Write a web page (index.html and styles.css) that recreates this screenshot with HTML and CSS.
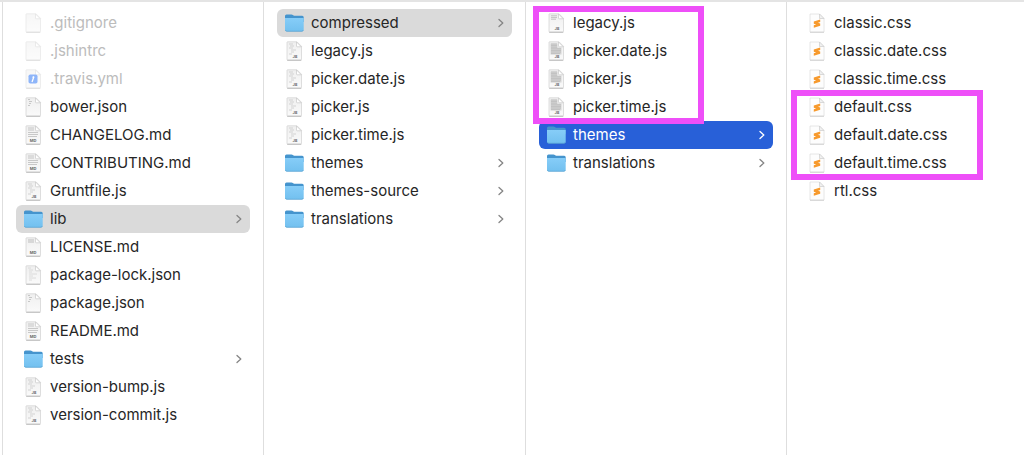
FILE: index.html
```
<!DOCTYPE html>
<html lang="en">
<head>
    <meta charset="UTF-8">
    <meta name="viewport" content="width=device-width, initial-scale=1.0">
    <title>Files</title>
    <link rel="stylesheet" href="styles.css">
</head>
<body>
    <!-- Icon shapes -->
    <svg class="icon-defs" aria-hidden="true">
        <defs>
            <linearGradient id="paper" x1="0" y1="0" x2="0" y2="1">
                <stop offset="0" stop-color="#efefef"/>
                <stop offset="1" stop-color="#fafafa"/>
            </linearGradient>
            <linearGradient id="front" x1="0" y1="0" x2="0" y2="1">
                <stop offset="0" stop-color="#86cdf8"/>
                <stop offset="1" stop-color="#72c0ef"/>
            </linearGradient>
        </defs>
        <symbol id="page" viewBox="0 0 20 20">
            <path d="M2.500 .8H12L16.500 5.300V18.200Q16.500 19 15.700 19H2.800Q2 19 2 18.200V1.300Q2 .8 2.500 .8Z" fill="url(#paper)" stroke="#d6d6d6" stroke-width=".8"/>
            <path d="M2.200 19.300H16.300" stroke="#b8b8b8" stroke-width=".9"/>
            <path d="M11.500 1V5Q11.500 5.800 12.300 5.800H16.300Z" fill="#fff" stroke="#c8c8c8" stroke-width=".7"/>
        </symbol>
        <symbol id="yml" viewBox="0 0 20 20">
            <use href="#page"/>
            <rect x="4.500" y="5.500" width="9" height="9" rx="1.800" fill="#1f6df5"/>
            <path d="M10 7.500L8 13M8.500 8.500L10 7.500" stroke="#fff" stroke-width="1.300" fill="none"/>
        </symbol>
        <symbol id="json" viewBox="0 0 20 20">
            <use href="#page"/>
            <path d="M4 2.500H6M5 4.500H8M5 6.500H7M4 8.500H6" stroke="#bdbdbd" stroke-width=".8"/>
        </symbol>
        <symbol id="json-long" viewBox="0 0 20 20">
            <use href="#page"/>
            <path d="M4 3H7M5 5H9M5 7H8M5 9H13M5 11H9M5 13H12M5 15H8" stroke="#d6d6d6" stroke-width=".8"/>
        </symbol>
        <symbol id="md" viewBox="0 0 20 20">
            <use href="#page"/>
            <path d="M4 3H10M4 5H10M4 7.500H14M4 9.500H14M4 11.500H13" stroke="#bcbcbc" stroke-width=".8"/>
        </symbol>
        <symbol id="md-short" viewBox="0 0 20 20">
            <use href="#page"/>
            <path d="M4 3H10M4 5H10" stroke="#b8b8b8" stroke-width=".9"/>
        </symbol>
        <symbol id="js" viewBox="0 0 20 20">
            <use href="#page"/>
            <path d="M4 3H8M5 5H9M4 7H8M6 9H11M6 11H9M4 13H7" stroke="#cacaca" stroke-width=".8"/>
        </symbol>
        <symbol id="js-short" viewBox="0 0 20 20">
            <use href="#page"/>
            <path d="M4 2.800H10M4 4.600H10M4 6.200H9" stroke="#b8b8b8" stroke-width=".8"/>
        </symbol>
        <symbol id="js-dense" viewBox="0 0 20 20">
            <use href="#page"/>
            <path d="M3.500 2.500H10.500V6.500H14.500V13.500H3.500Z" fill="#d6d6d6"/>
            <path d="M4 3H10M4 4.600H10M4 6.200H10M4 7.800H14M4 9.400H14M4 11H14M4 12.600H13" stroke="#b6b6b6" stroke-width=".7"/>
        </symbol>
        <symbol id="css" viewBox="0 0 20 20">
            <path d="M2 1H11.500L16 5.500V19H2Z" fill="#fdfdfd" stroke="#e0e0e0" stroke-width=".8"/>
            <path d="M2 19.300H16" stroke="#cbcbcb" stroke-width=".8"/>
            <path d="M11.500 1V5.500H16Z" fill="#f1f1f1" stroke="#cccccc" stroke-width=".7"/>
            <path d="M12.200 6.500V9L10 9.700L12.200 10.500V12.700L5.800 14.700V12.200L8.200 11.500L5.800 10.700V8.500Z" fill="#f79a2d"/>
        </symbol>
        <symbol id="folder" viewBox="0 0 20 20">
            <path d="M0 3Q0 1.500 1.500 1.500H6.500Q7.300 1.500 7.900 2.100T9.300 2.700H17.200Q18.700 2.700 18.700 4.200V9H0Z" fill="#4594cd"/>
            <path d="M0 5H18.700V16.800Q18.700 18.300 17.200 18.300H1.500Q0 18.300 0 16.800Z" fill="url(#front)"/>
            <path d="M.5 17.200Q.7 18.300 1.700 18.300H17Q18 18.300 18.200 17.200" fill="none" stroke="#5aa5d3" stroke-width=".8"/>
        </symbol>
        <symbol id="chevron" viewBox="0 0 6 10">
            <path d="M1 1.500L4.800 5L1 8.500" fill="none" stroke="currentColor" stroke-width="1.300" stroke-linecap="round" stroke-linejoin="round"/>
        </symbol>
    </svg>

    <main class="browser">
        <ul class="column">
            <li class="row hidden-file"><svg class="icon"><use href="#page"/></svg><span class="name">.gitignore</span></li>
            <li class="row hidden-file"><svg class="icon"><use href="#page"/></svg><span class="name">.jshintrc</span></li>
            <li class="row hidden-file"><svg class="icon"><use href="#yml"/></svg><span class="name">.travis.yml</span></li>
            <li class="row"><svg class="icon"><use href="#json"/></svg><span class="name">bower.json</span></li>
            <li class="row"><svg class="icon"><use href="#md"/><text x="9" y="17" class="icon-label">MD</text></svg><span class="name">CHANGELOG.md</span></li>
            <li class="row"><svg class="icon"><use href="#md"/><text x="9" y="17" class="icon-label">MD</text></svg><span class="name">CONTRIBUTING.md</span></li>
            <li class="row"><svg class="icon"><use href="#js"/><text x="10" y="17" class="icon-label">JS</text></svg><span class="name">Gruntfile.js</span></li>
            <li class="row open"><svg class="icon"><use href="#folder"/></svg><span class="name">lib</span><svg class="chevron"><use href="#chevron"/></svg></li>
            <li class="row"><svg class="icon"><use href="#md-short"/><text x="9" y="17" class="icon-label">MD</text></svg><span class="name">LICENSE.md</span></li>
            <li class="row"><svg class="icon"><use href="#json-long"/></svg><span class="name">package-lock.json</span></li>
            <li class="row"><svg class="icon"><use href="#json"/></svg><span class="name">package.json</span></li>
            <li class="row"><svg class="icon"><use href="#md"/><text x="9" y="17" class="icon-label">MD</text></svg><span class="name">README.md</span></li>
            <li class="row"><svg class="icon"><use href="#folder"/></svg><span class="name">tests</span><svg class="chevron"><use href="#chevron"/></svg></li>
            <li class="row"><svg class="icon"><use href="#js"/><text x="10" y="17" class="icon-label">JS</text></svg><span class="name">version-bump.js</span></li>
            <li class="row"><svg class="icon"><use href="#js"/><text x="10" y="17" class="icon-label">JS</text></svg><span class="name">version-commit.js</span></li>
        </ul>

        <ul class="column">
            <li class="row open"><svg class="icon"><use href="#folder"/></svg><span class="name">compressed</span><svg class="chevron"><use href="#chevron"/></svg></li>
            <li class="row"><svg class="icon"><use href="#js"/><text x="10" y="17" class="icon-label">JS</text></svg><span class="name">legacy.js</span></li>
            <li class="row"><svg class="icon"><use href="#js"/><text x="10" y="17" class="icon-label">JS</text></svg><span class="name">picker.date.js</span></li>
            <li class="row"><svg class="icon"><use href="#js"/><text x="10" y="17" class="icon-label">JS</text></svg><span class="name">picker.js</span></li>
            <li class="row"><svg class="icon"><use href="#js"/><text x="10" y="17" class="icon-label">JS</text></svg><span class="name">picker.time.js</span></li>
            <li class="row"><svg class="icon"><use href="#folder"/></svg><span class="name">themes</span><svg class="chevron"><use href="#chevron"/></svg></li>
            <li class="row"><svg class="icon"><use href="#folder"/></svg><span class="name">themes-source</span><svg class="chevron"><use href="#chevron"/></svg></li>
            <li class="row"><svg class="icon"><use href="#folder"/></svg><span class="name">translations</span><svg class="chevron"><use href="#chevron"/></svg></li>
        </ul>

        <ul class="column">
            <li class="marked marked-js">
                <ul>
                    <li class="row"><svg class="icon"><use href="#js-short"/><text x="10" y="17" class="icon-label">JS</text></svg><span class="name">legacy.js</span></li>
                    <li class="row"><svg class="icon"><use href="#js-dense"/><text x="10" y="17" class="icon-label">JS</text></svg><span class="name">picker.date.js</span></li>
                    <li class="row"><svg class="icon"><use href="#js-dense"/><text x="10" y="17" class="icon-label">JS</text></svg><span class="name">picker.js</span></li>
                    <li class="row"><svg class="icon"><use href="#js-dense"/><text x="10" y="17" class="icon-label">JS</text></svg><span class="name">picker.time.js</span></li>
                </ul>
            </li>
            <li class="row selected"><svg class="icon"><use href="#folder"/></svg><span class="name">themes</span><svg class="chevron"><use href="#chevron"/></svg></li>
            <li class="row"><svg class="icon"><use href="#folder"/></svg><span class="name">translations</span><svg class="chevron"><use href="#chevron"/></svg></li>
        </ul>

        <ul class="column">
            <li class="row"><svg class="icon"><use href="#css"/></svg><span class="name">classic.css</span></li>
            <li class="row"><svg class="icon"><use href="#css"/></svg><span class="name">classic.date.css</span></li>
            <li class="row"><svg class="icon"><use href="#css"/></svg><span class="name">classic.time.css</span></li>
            <li class="marked marked-css">
                <ul>
                    <li class="row"><svg class="icon"><use href="#css"/></svg><span class="name">default.css</span></li>
                    <li class="row"><svg class="icon"><use href="#css"/></svg><span class="name">default.date.css</span></li>
                    <li class="row"><svg class="icon"><use href="#css"/></svg><span class="name">default.time.css</span></li>
                </ul>
            </li>
            <li class="row"><svg class="icon"><use href="#css"/></svg><span class="name">rtl.css</span></li>
        </ul>
    </main>
</body>
</html>
```
FILE: styles.css
```
*,
*::after {
    margin: 0;
    padding: 0;
    box-sizing: border-box;
}

body {
    background: #fff;
    color: #262626;
    font-family: Inter, "Liberation Sans", sans-serif;
    font-size: 15px;
    line-height: 28px;
}

ul {
    list-style: none;
}

.icon-defs {
    display: block;
    width: 0;
    height: 0;
}

/* Column view */
.browser {
    display: grid;
    grid-template-columns: 261fr 262fr 261fr 238fr;
    min-height: 100vh;
    padding-left: 2px;
    border-top: 2px solid #e4e4e4;
}

.column {
    padding: 7px 13px 0;
    border-left: 1px solid #dedede;
}

/* Rows */
.row {
    display: flex;
    align-items: center;
    gap: 6px;
    height: 28px;
    padding: 0 8px;
    border-radius: 6px;
}

.icon {
    flex: none;
    width: 20px;
    height: 20px;
}

.icon-label {
    fill: #666;
    font-size: 4px;
    font-weight: 700;
    line-height: 4px;
    text-anchor: middle;
}

.name {
    flex: 1;
    white-space: nowrap;
}

.chevron {
    flex: none;
    width: 6px;
    height: 10px;
    color: #858585;
}

.hidden-file {
    color: #bcbcbc;
}

.hidden-file .icon {
    opacity: 0.5;
}

.open {
    background: #dadada;
}

.selected {
    background: #2860d8;
    color: #fff;
}

.selected .chevron {
    color: #fff;
}

/* Pink frame drawn over a run of files */
.marked {
    position: relative;
}

.marked::after {
    content: "";
    position: absolute;
    top: -3px;
    bottom: -3px;
    border: 6px solid #ee4ff8;
    pointer-events: none;
}

.marked-js::after {
    left: -6px;
    width: 171px;
}

.marked-css::after {
    left: -9px;
    width: 192px;
}
```
